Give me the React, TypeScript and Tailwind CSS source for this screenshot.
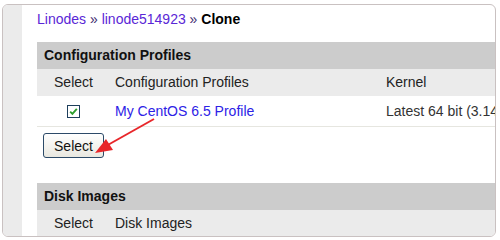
export default function App() {
    return (
        <div className="w-[500px] h-[240px] bg-white relative overflow-hidden font-['Liberation_Sans',Arial,sans-serif] text-[14px]">
            <div className="ml-[2px] mt-[4px] w-[494px] h-[233px] border border-[#c9c1c1] rounded-[6px] flex overflow-hidden">
                {/* left gutter */}
                <div className="w-[19px] shrink-0 bg-[#ebebeb]" />

                <div className="flex-1 min-w-0 pl-[15px]">
                    {/* breadcrumb */}
                    <div className="h-[37px] pt-[6px] leading-[16px] whitespace-nowrap">
                        <a className="text-[#5a27d6]">Linodes</a>
                        <span className="text-[#3d2a6e]"> » </span>
                        <a className="text-[#5a27d6]">linode514923</a>
                        <span className="text-[#3d2a6e]"> » </span>
                        <span className="font-bold text-black">Clone</span>
                    </div>

                    {/* Configuration Profiles */}
                    <div className="h-[27px] bg-[#cccccc] flex items-center pl-[7px] font-bold text-[#111]">
                        Configuration Profiles
                    </div>
                    <div className="h-[27px] bg-[#ebebeb] grid grid-cols-[73px_276px_1fr] items-center text-[#222] whitespace-nowrap">
                        <div className="text-center">Select</div>
                        <div className="pl-[5px]">Configuration Profiles</div>
                        <div>Kernel</div>
                    </div>
                    <div className="h-[31px] border-b border-[#e6e6e0] grid grid-cols-[73px_276px_1fr] items-center whitespace-nowrap">
                        <div className="flex justify-center">
                            <svg width="13" height="13" viewBox="0 0 13 13">
                                <rect x="0.5" y="0.5" width="12" height="12" fill="#fff" stroke="#1e3f5c" />
                                <path d="M3.2 6.6 L5.4 8.8 L9.8 3.8" fill="none" stroke="#2e9e2e" strokeWidth="1.9" />
                            </svg>
                        </div>
                        <div className="pl-[5px] text-[#2d22e6]">My CentOS 6.5 Profile</div>
                        <div className="text-[#333]">Latest 64 bit (3.14.5-x86_64-linode42)</div>
                    </div>

                    <div className="pt-[6px] pl-[6px]">
                        <button className="w-[61px] h-[25px] border border-[#2c4a68] rounded-[3px] bg-gradient-to-b from-white to-[#e9e8e0] text-[#111] text-[14px] leading-none">
                            Select
                        </button>
                    </div>

                    {/* Disk Images */}
                    <div className="mt-[25px] h-[27px] bg-[#cccccc] flex items-center pl-[7px] font-bold text-[#111]">
                        Disk Images
                    </div>
                    <div className="h-[27px] bg-[#ebebeb] grid grid-cols-[73px_276px_1fr] items-center text-[#222] whitespace-nowrap">
                        <div className="text-center">Select</div>
                        <div className="pl-[5px]">Disk Images</div>
                        <div />
                    </div>
                </div>
            </div>

            {/* annotation arrow */}
            <svg className="absolute left-0 top-0 pointer-events-none" width="500" height="240">
                <line x1="154" y1="119" x2="106" y2="146" stroke="#e8262a" strokeWidth="2" />
                <polygon points="95,153 106,139 113,150" fill="#e8262a" />
            </svg>
        </div>
    );
}
